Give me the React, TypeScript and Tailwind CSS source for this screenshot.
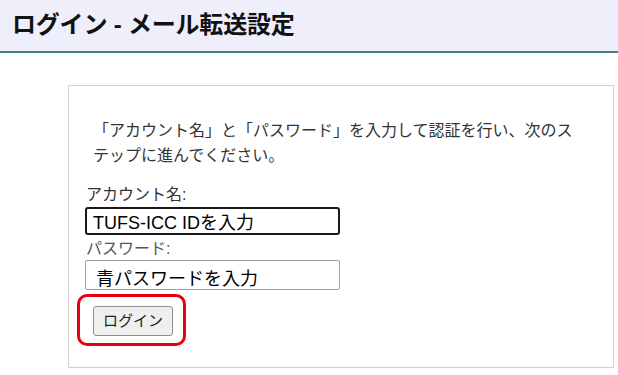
export default function App() {
  return (
    <div
      className="min-h-[375px] w-[618px] bg-white text-[#222]"
      style={{ fontFamily: '"Liberation Sans", "Noto Sans CJK JP", sans-serif' }}
    >
      <header className="h-[53px] border-b-2 border-[#3f8079] bg-[#eeeffb] pl-3 pt-[9px]">
        <h1 className="text-[24px] font-bold leading-[32px] tracking-[-0.2px] text-[#111]">
          ログイン - メール転送設定
        </h1>
      </header>

      <main className="ml-[68px] mt-8 w-[546px] border border-[#d0d0d0] pb-[21px] pl-4 pr-4 pt-8">
        <p className="pl-2 pr-6 text-[16px] leading-[25px] text-[#333]">
          「アカウント名」と「パスワード」を入力して認証を行い、次のステップに進んでください。
        </p>

        <form className="flex flex-col" onSubmit={(e) => e.preventDefault()}>
          <label htmlFor="account" className="ml-px mt-4 h-[22px] text-[16px] leading-[22px] text-[#333]">
            アカウント名:
          </label>
          <input
            id="account"
            readOnly
            defaultValue="TUFS-ICC IDを入力"
            className="mt-px h-[28px] w-[255px] rounded-[3px] border-2 border-[#1a1a1a] py-0 pl-[6px] text-[18px] leading-[22px] text-black outline-none"
          />

          <label htmlFor="password" className="ml-px mt-[3px] h-[22px] text-[16px] leading-[22px] text-[#555]">
            パスワード:
          </label>
          <input
            id="password"
            readOnly
            defaultValue="青パスワードを入力"
            className="h-[30px] w-[255px] rounded-[2px] border border-[#a0a0a0] pl-[10px] pt-[4px] text-[18px] leading-[22px] text-black outline-none"
          />

          <div className="ml-[-8px] mt-1 w-[109px] rounded-[10px] border-[3px] border-[#e60012] pb-[7px] pl-[13px] pt-[9px]">
            <button
              type="submit"
              className="h-[30px] w-[80px] rounded-[3px] border border-[#8f8f8f] bg-[#efefef] text-[15px] text-[#222]"
            >
              ログイン
            </button>
          </div>
        </form>
      </main>
    </div>
  );
}
